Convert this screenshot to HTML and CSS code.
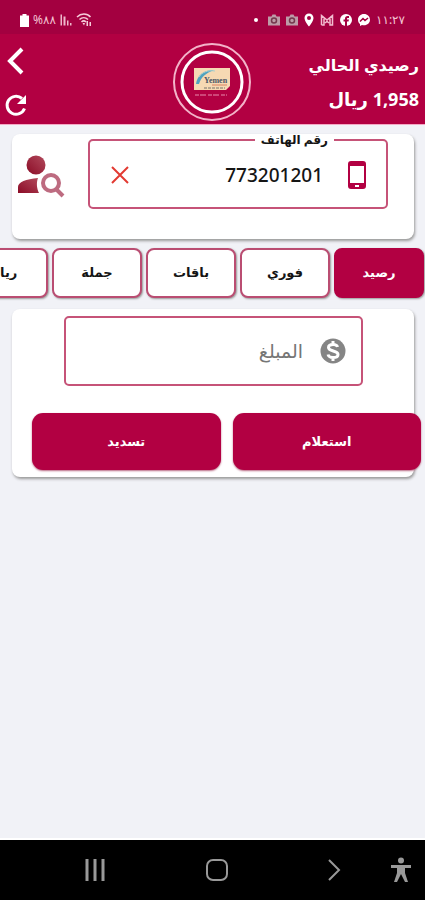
FILE: index.html
```html
<!DOCTYPE html>
<html lang="ar" dir="rtl">
<head>
	<meta charset="utf-8">
	<meta name="viewport" content="width=device-width, initial-scale=1">
	<title>رصيد</title>
	<link rel="stylesheet" href="styles.css">
</head>
<body>

	<div class="status-bar">
		<div class="status-group">
			<span class="clock">١١:٢٧</span>
			<svg width="12" height="12" viewBox="0 0 24 24"><path fill="#fff" d="M12 0C5 0 0 5 0 11.600c0 3.500 1.500 6.500 4 8.500V24l4-2c1.300.4 2.600.5 4 .5 7 0 12-5 12-11S19 0 12 0z"/><path fill="none" stroke="#a30040" stroke-width="3" d="M4 15l6-6 4 4 6-5"/></svg>
			<svg width="12" height="12" viewBox="0 0 24 24"><circle cx="12" cy="12" r="12" fill="#fff"/><path fill="#a30040" d="M10 24v-9H7v-4h3V9c0-3 2-5 5-5h3v4h-2c-1.500 0-2 .5-2 2v1h4l-1 4h-3v9z"/></svg>
			<svg width="14" height="12" viewBox="0 0 28 24"><path fill="none" stroke="#f3bdd0" stroke-width="3" d="M3 22V3l11 9 11-9v19h-5V9M3 22h5V9M10 18l4-3 4 3"/></svg>
			<svg width="10" height="14" viewBox="0 0 20 28"><path fill="#fff" fill-rule="evenodd" d="M10 1C5 1 1 5 1 10c0 7 9 17 9 17s9-10 9-17c0-5-4-9-9-9zm0 5a4 4 0 1 1 0 8 4 4 0 0 1 0-8z"/></svg>
			<svg width="12" height="12" viewBox="0 0 24 24"><path fill="#bd9ba7" d="M0 5h7l2-4h6l2 4h7v18H0z"/><circle cx="12" cy="13" r="5" fill="none" stroke="#74384d" stroke-width="3"/></svg>
			<svg width="12" height="12" viewBox="0 0 24 24"><path fill="#bd9ba7" d="M0 5h7l2-4h6l2 4h7v18H0z"/><circle cx="12" cy="13" r="5" fill="none" stroke="#74384d" stroke-width="3"/></svg>
			<span class="dot"></span>
		</div>
		<div class="status-group status-device">
			<svg width="16" height="14" viewBox="0 0 32 28"><g fill="none" stroke="#f6cbd9" stroke-width="3"><path d="M2 8C10 0 22 0 29 8M7 13c5-5 12-5 17 0M11 18c3-3 6-3 9 0"/></g><path fill="#f6cbd9" d="M13 20h5l-2 5zM21 16h3v10h-3zM27 18h3v8h-3z"/></svg>
			<svg width="12" height="12" viewBox="0 0 24 24"><path fill="#eeb7ca" d="M1 1h3v22H1zM7 5h4v18H7zM14 13h3v10h-3zM20 18h3v5h-3z"/></svg>
			<span class="battery-text">٨٨%</span>
			<svg width="9" height="13" viewBox="0 0 18 26"><path fill="#fff" d="M5 0h8v3h5v23H0V3h5z"/></svg>
		</div>
	</div>

	<header class="top-bar">
		<div class="balance">
			<h1>رصيدي الحالي</h1>
			<p>1,958 ريال</p>
		</div>

		<svg class="emblem" width="80" height="80" viewBox="0 0 80 80">
			<circle cx="40" cy="40" r="38" fill="none" stroke="#f3b3c9" stroke-width="2"/>
			<circle cx="40" cy="40" r="30" fill="none" stroke="#fff" stroke-width="3"/>
			<path fill="#f6d9b3" d="M22 26h36v18l-4 4H22z"/>
			<path fill="#4fa3bf" d="M24 42c1-8 7-14 18-14-8 3-13 7-15 14z"/>
			<path fill="none" stroke="#a5d0d0" stroke-width="1" d="M27 35c3-5 9-7 16-6"/>
			<text x="32" y="41" class="emblem-name" direction="ltr">Yemen</text>
			<path stroke="#d98263" d="M40 43h15"/>
			<path stroke="#77736b" stroke-dasharray="3 1" d="M32 46h21"/>
			<path stroke="#e88bad" stroke-dasharray="4 1 6 2" d="M23 53h32"/>
		</svg>

		<div class="top-actions">
			<button class="icon-button" type="button" aria-label="رجوع">
				<svg width="24" height="28" viewBox="0 0 24 28"><path fill="none" stroke="#fff" stroke-width="4" d="M18 2L6 14l12 12"/></svg>
			</button>
			<button class="icon-button" type="button" aria-label="تحديث">
				<svg width="24" height="24" viewBox="0 0 24 24"><path fill="none" stroke="#fff" stroke-width="3" d="M20.500 15.500A9 9 0 1 1 18 5.500"/><path fill="#fff" d="M22 2v9h-9l4-4z"/></svg>
			</button>
		</div>
	</header>

	<main>
		<section class="card phone-card">
			<fieldset class="field">
				<legend><label for="phone">رقم الهاتف</label></legend>
				<svg width="18" height="28" viewBox="0 0 18 28"><path fill="#b20042" fill-rule="evenodd" d="M3 0h12a3 3 0 0 1 3 3v22a3 3 0 0 1-3 3H3a3 3 0 0 1-3-3V3a3 3 0 0 1 3-3zM2 5v17h14V5zM7 24v2h4v-2z"/></svg>
				<input id="phone" type="tel" value="773201201">
				<button class="icon-button" type="button" aria-label="مسح">
					<svg width="20" height="20" viewBox="0 0 20 20"><path stroke="#e23a32" stroke-width="2" d="M2 2l16 16M18 2L2 18"/></svg>
				</button>
			</fieldset>
			<button class="icon-button find-person" type="button" aria-label="بحث عن مشترك">
				<svg width="48" height="44" viewBox="0 0 48 44">
					<defs><linearGradient id="person" x1="0" y1="1" x2="1" y2="0"><stop offset="0" stop-color="#8b0b26"/><stop offset="1" stop-color="#b24b5d"/></linearGradient></defs>
					<circle cx="19" cy="11" r="9.500" fill="url(#person)"/>
					<path fill="url(#person)" d="M1 39v-6c0-5 8-8 20-9-2 5-1 11 1 15z"/>
					<circle cx="34" cy="29" r="8" fill="none" stroke="#bd6b80" stroke-width="4"/>
					<path stroke="#bd6b80" stroke-width="4" d="M39 35l7 7"/>
				</svg>
			</button>
		</section>

		<nav class="tabs">
			<button class="tab active" type="button">رصيد</button>
			<button class="tab" type="button">فوري</button>
			<button class="tab" type="button">باقات</button>
			<button class="tab" type="button">جملة</button>
			<button class="tab" type="button">ريال</button>
		</nav>

		<form class="card pay-card">
			<div class="field amount-field">
				<svg width="26" height="26" viewBox="0 0 26 26"><circle cx="13" cy="13" r="12.500" fill="#858585"/><path fill="none" stroke="#fff" stroke-width="3" d="M17.500 9c-.5-2-2.500-2.500-4.500-2.500-2.500 0-4.500 1-4.500 3 0 4.500 9.500 2.500 9.500 7 0 2-2 3-5 3-2.500 0-4.500-1-5-3M13 3v4M13 19v4"/></svg>
				<input id="amount" type="text" inputmode="numeric" placeholder="المبلغ" aria-label="المبلغ">
			</div>
			<div class="actions">
				<button type="button">استعلام</button>
				<button type="submit">تسديد</button>
			</div>
		</form>
	</main>

	<nav class="system-bar">
		<button class="icon-button" type="button" aria-label="إمكانية الوصول">
			<svg width="20" height="26" viewBox="0 0 20 26"><g fill="#999"><circle cx="10" cy="3.500" r="3"/><path d="M0 8h20v3h-6v5l3 9h-3l-4-8-4 8H3l3-9v-5H0z"/></g></svg>
		</button>
		<div class="system-keys">
			<button class="icon-button" type="button" aria-label="الرجوع">
				<svg width="14" height="22" viewBox="0 0 14 22"><path fill="none" stroke="#999" stroke-width="2" d="M2 1l10 10L2 21"/></svg>
			</button>
			<button class="icon-button" type="button" aria-label="الرئيسية">
				<svg width="24" height="24" viewBox="0 0 24 24"><rect x="2" y="2" width="20" height="20" rx="6" fill="none" stroke="#999" stroke-width="2"/></svg>
			</button>
			<button class="icon-button" type="button" aria-label="التطبيقات الأخيرة">
				<svg width="22" height="22" viewBox="0 0 22 22"><path stroke="#999" stroke-width="3" d="M3 0v22M11 0v22M19 0v22"/></svg>
			</button>
		</div>
	</nav>

</body>
</html>
```
FILE: styles.css
```css
* {
	box-sizing: border-box;
}

body {
	margin: 0;
	min-height: 100vh;
	display: flex;
	flex-direction: column;
	background-color: #f1f2f7;
	color: #151515;
	font-family: "Noto Sans", "DejaVu Sans", sans-serif;
	font-size: 14px;
	overflow-x: hidden;
}

button,
input {
	font-family: inherit;
}

svg {
	display: block;
	flex: none;
}

.icon-button {
	padding: 0;
	border: 0;
	background: none;
}

/* phone status bar */

.status-bar {
	height: 34px;
	padding: 6px 20px 0;
	display: flex;
	align-items: center;
	justify-content: space-between;
	background-color: #a30040;
	color: #f3c3d3;
}

.status-group {
	display: flex;
	align-items: center;
	gap: 6px;
	font-size: 12px;
	line-height: 16px;
}

.status-device {
	gap: 4px;
}

.dot {
	width: 4px;
	height: 4px;
	margin-right: 4px;
	border-radius: 2px;
	background-color: #fff;
}

/* balance header */

.top-bar {
	height: 91px;
	padding: 6px 6px 0 4px;
	display: grid;
	grid-template-columns: 1fr auto 1fr;
	align-items: center;
	background-color: #b20042;
	border-bottom: 1px solid #f3a9c4;
	color: #fff;
}

.balance h1,
.balance p {
	margin: 0;
	font-size: 18px;
	font-weight: bold;
	line-height: 34px;
	white-space: nowrap;
}

.balance h1 {
	font-size: 16px;
}

.top-actions {
	display: flex;
	flex-direction: column;
	align-items: flex-end;
	gap: 18px;
}

.emblem-name {
	font-family: "Liberation Serif", serif;
	font-size: 8px;
	font-weight: bold;
	fill: #4b5563;
}

/* cards */

.card {
	margin: 0 11px 0 12px;
	background-color: #fff;
	border-radius: 8px;
	box-shadow: 1px 2px 3px #999;
}

.phone-card {
	height: 105px;
	margin-top: 9px;
	padding: 0 26px 0 5px;
	display: flex;
	align-items: flex-start;
	justify-content: space-between;
}

.field {
	height: 70px;
	min-width: 0;
	margin: 0;
	padding: 0 20px;
	display: flex;
	align-items: center;
	border: 2px solid #c65378;
	border-radius: 5px;
	background-color: #fff;
}

.field input {
	flex: 1;
	min-width: 0;
	padding: 0;
	border: 0;
	outline: 0;
	background: none;
	color: #151515;
	font-size: 19px;
	font-weight: 500;
	text-align: right;
}

.phone-card .field {
	flex: 0 0 81%;
	height: 75px;
	padding-bottom: 4px;
}

.phone-card legend {
	margin-right: 32px;
	padding: 0 6px;
	font-size: 12px;
	font-weight: bold;
	line-height: 12px;
}

.phone-card .field input {
	margin-right: 25px;
}

.find-person {
	margin-top: 20px;
}

/* service tabs, the row runs off the edge */

.tabs {
	padding: 9px 1px 11px 0;
	display: flex;
	gap: 4px;
	overflow: hidden;
}

.tab {
	flex: none;
	width: 90px;
	height: 50px;
	padding: 0 0 2px;
	border: 2px solid #ba4d72;
	border-radius: 8px;
	background-color: #fff;
	box-shadow: 1px 1px 2px #999;
	color: #151515;
	font-size: 13px;
	font-weight: bold;
}

.tab.active {
	border-color: #b20042;
	background-color: #b20042;
	color: #fff;
}

/* payment form */

.pay-card {
	padding: 7px 0 7px 20px;
}

.amount-field {
	margin: 0 51px 0 32px;
	padding: 0 15px;
}

.amount-field input {
	margin-right: 17px;
}

.amount-field input::placeholder {
	color: #757575;
	opacity: 1;
}

.actions {
	margin: 27px -7px 0 0;
	display: flex;
	gap: 12px;
}

.actions button {
	flex: 1;
	height: 57px;
	padding: 0 0 2px;
	border: 0;
	border-radius: 11px;
	background-color: #b20042;
	box-shadow: 0 1px 2px #b96883;
	color: #fff;
	font-size: 13px;
	font-weight: bold;
}

/* phone navigation */

.system-bar {
	height: 60px;
	margin-top: auto;
	padding: 0 14px 0 84px;
	display: flex;
	align-items: center;
	gap: 50px;
	background-color: #000;
	box-shadow: 0 -2px 0 #fff;
}

.system-keys {
	flex: 1;
	display: flex;
	align-items: center;
	justify-content: space-between;
}
```
